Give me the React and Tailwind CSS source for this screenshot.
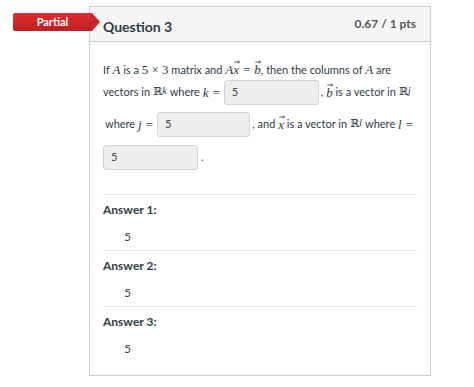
import React from 'react';

const serif = { fontFamily: '"Liberation Serif", "DejaVu Serif", serif' };

function M({ children }) {
  return (
    <span className="italic text-[13px]" style={serif}>
      {children}
    </span>
  );
}

function Vec({ children }) {
  return (
    <span className="relative inline-block italic text-[13px]" style={serif}>
      {children}
      <svg className="absolute left-[1px] top-[0px]" width="6" height="4" viewBox="0 0 6 4">
        <path d="M0.3 2 H5.5 M3.8 0.6 L5.5 2 L3.8 3.4" stroke="#2d3b45" strokeWidth="0.8" fill="none" />
      </svg>
    </span>
  );
}

function R({ sup }) {
  return (
    <span className="mx-[3px] text-[11px]" style={{ fontFamily: '"DejaVu Serif", serif' }}>
      ℝ<sup className="italic text-[10px] relative top-[-1px]" style={serif}>{sup}</sup>
    </span>
  );
}

function Box() {
  return (
    <span className="w-[95px] h-[25px] inline-flex items-center pl-[7px] bg-[#eeeeee] border border-[#d4d4d4] rounded-[3px] text-[11px] text-[#444]">
      5
    </span>
  );
}

function Eq() {
  return (
    <span className="mx-[4px] text-[13px]" style={serif}>=</span>
  );
}

function Answer({ n }) {
  return (
    <div className="border-t border-[#e6e6e6]">
      <div className="h-[16px] mt-[7px] flex items-center font-bold text-[12px]">Answer {n}:</div>
      <div className="h-[16px] mt-[11px] flex items-center pl-[21px] text-[12px] text-[#444]">5</div>
      <div className="h-[5px]" />
    </div>
  );
}

export default function App() {
  return (
    <div
      className="relative w-[474px] h-[387px] bg-white text-[#2d3b45] overflow-hidden"
      style={{ fontFamily: 'Lato, "Open Sans", sans-serif' }}
    >
      <div className="ml-[89px] mt-[6px] w-[342px] h-[370px] border border-[#c7cdd1] bg-white">
        <div className="h-[35px] bg-[#f5f5f5] border-b border-[#c7cdd1] flex items-center justify-between pl-[13px] pr-[14px]">
          <span className="font-bold text-[14px] mt-[4px]">Question 3</span>
          <span className="font-bold text-[12px] text-[#555]">0.67 / 1 pts</span>
        </div>
        <div className="px-[13px] pt-[18px] text-[11px]">
          <div className="h-[20px] flex items-center whitespace-nowrap">
            If&nbsp;<M>A</M>&nbsp;is a&nbsp;<span className="text-[13px]" style={serif}>5 × 3</span>&nbsp;matrix and&nbsp;
            <M>A</M><Vec>x</Vec>
            <Eq />
            <Vec>b</Vec>, then the columns of&nbsp;<M>A</M>&nbsp;are
          </div>
          <div className="h-[25px] flex items-center whitespace-nowrap">
            vectors in<R sup="k" />where&nbsp;<M>k</M>
            <Eq />
            <Box />
            <span className="ml-[2px]">,&nbsp;</span><Vec>b</Vec>&nbsp;is a vector in<R sup="j" />
          </div>
          <div className="h-[25px] mt-[7px] flex items-center whitespace-nowrap">
            <span className="ml-[2px]">where&nbsp;</span><M>j</M>
            <Eq />
            <Box />
            <span className="ml-[2px]">, and&nbsp;</span><Vec>x</Vec>&nbsp;is a vector in<R sup="l" />where&nbsp;<M>l</M>
            <Eq />
          </div>
          <div className="h-[25px] mt-[8px] flex items-center">
            <Box />
            <span className="ml-[3px]">.</span>
          </div>
          <div className="mt-[24px]">
            <Answer n={1} />
            <Answer n={2} />
            <Answer n={3} />
          </div>
        </div>
      </div>

      <div className="absolute left-[13px] top-[13px] flex items-center">
        <div className="w-[79px] h-[18px] bg-gradient-to-b from-[#dc2d2f] to-[#bd1f22] rounded-l-[2px] flex items-center justify-center text-white font-bold text-[11px]">
          Partial
        </div>
        <div className="w-0 h-0 border-y-[9px] border-y-transparent border-l-[8px] border-l-[#c92427]" />
      </div>
    </div>
  );
}
